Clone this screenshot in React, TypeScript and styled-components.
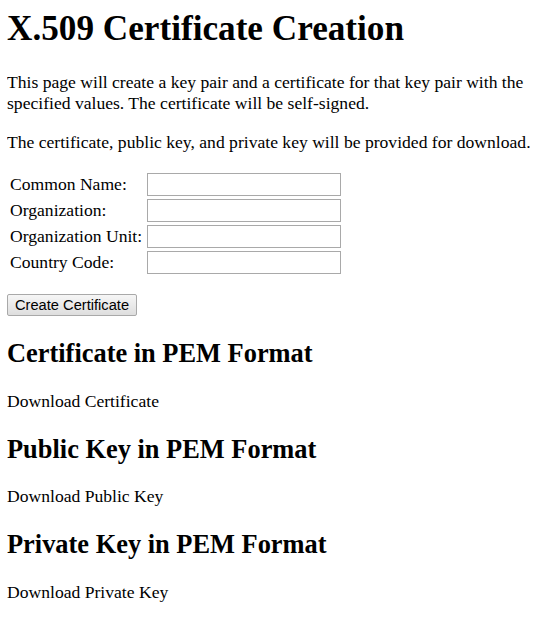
import styled, { createGlobalStyle } from "styled-components";

const GlobalStyle = createGlobalStyle`
    body {
        margin: 8.5px 0 8px 7px;
        font-family: "Liberation Serif", "Times New Roman", serif;
        font-size: 17.6px;
        color: #000;
        background: #fff;
    }
`

const Title = styled.h1`
    font-size: 35.2px;
    font-weight: bold;
    margin: 0 0 23.6px;
`

const Text = styled.p`
    margin: 17.6px 0;
    max-width: 526px;
`

const FormTable = styled.table`
    border-spacing: 2px;
    font-size: 17.6px;
`

const Cell = styled.td<{ label?: boolean }>`
    padding: 1px ${(props) => (props.label ? "2px" : "1px")} 0 1px;
`

const Input = styled.input`
    width: 194px;
    height: 23px;
    padding: 1px 2px;
    border: 1px solid #a9a9a9;
    font-family: "Liberation Sans", Arial, sans-serif;
    font-size: 14.67px;
    box-sizing: border-box;
    display: block;
`

const Button = styled.button`
    margin-top: 17.6px;
    height: 22px;
    box-sizing: border-box;
    font-family: "Liberation Sans", Arial, sans-serif;
    font-size: 14.67px;
    padding: 0 7px;
    color: #000;
    border: 1px solid #a9a9a9;
    border-radius: 2px;
    background: linear-gradient(#f6f6f6, #dedede);
`

const Section = styled.h2`
    font-size: 26.4px;
    font-weight: bold;
    margin: 21.9px 0;
`

const fields = ["Common Name:", "Organization:", "Organization Unit:", "Country Code:"];

const sections = [
    { title: "Certificate in PEM Format", link: "Download Certificate" },
    { title: "Public Key in PEM Format", link: "Download Public Key" },
    { title: "Private Key in PEM Format", link: "Download Private Key" },
];

const App = () => {
    return (
        <>
            <GlobalStyle />
            <Title>X.509 Certificate Creation</Title>
            <Text>
                This page will create a key pair and a certificate for that key pair with the
                specified values. The certificate will be self-signed.
            </Text>
            <Text>The certificate, public key, and private key will be provided for download.</Text>
            <FormTable>
                <tbody>
                    {fields.map((f) => (
                        <tr key={f}>
                            <Cell label>{f}</Cell>
                            <Cell><Input type="text" /></Cell>
                        </tr>
                    ))}
                </tbody>
            </FormTable>
            <Button type="button">Create Certificate</Button>
            {sections.map((s) => (
                <div key={s.title}>
                    <Section>{s.title}</Section>
                    <Text>{s.link}</Text>
                </div>
            ))}
        </>
    )
}

export default App;
